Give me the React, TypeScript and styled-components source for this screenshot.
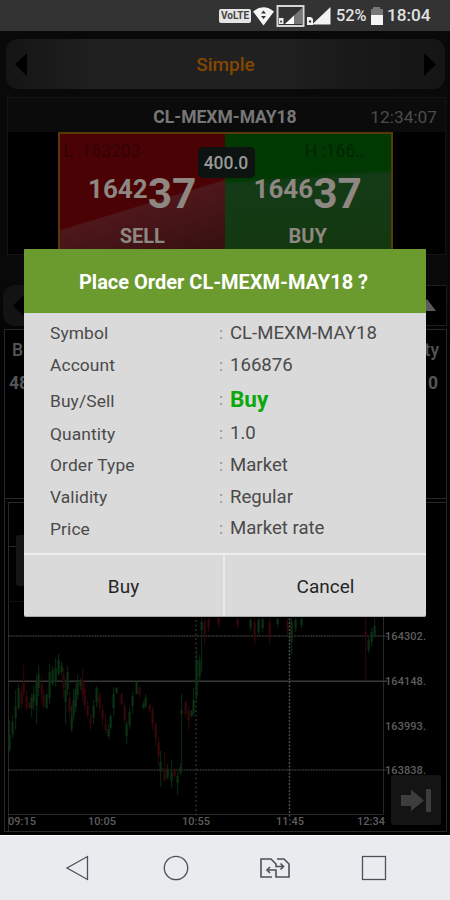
import React from "react";
import styled, { createGlobalStyle } from "styled-components";

const GlobalStyle = createGlobalStyle`
  * { box-sizing: border-box; }
  body { margin: 0; background: #000; font-family: Roboto, "Liberation Sans", sans-serif; }
`;

const Phone = styled.div`
  position: relative;
  width: 450px;
  height: 900px;
  display: flex;
  flex-direction: column;
  overflow: hidden;
  background: #000;
  white-space: nowrap;
`;

const StatusBar = styled.header`
  height: 31px;
  flex: none;
  display: flex;
  align-items: center;
  justify-content: flex-end;
  padding-right: 18px;
  background: #333;
  color: #e2e2e2;
`;
const VolteBadge = styled.span`
  width: 32px;
  height: 14px;
  border-radius: 2px;
  background: #e4e4e4;
  color: #444;
  font-size: 10px;
  font-weight: 700;
  line-height: 14px;
  text-align: center;
`;
const StatusIcon = styled.svg<{ $gap: number }>`
  display: block;
  flex: none;
  margin-left: ${(p) => p.$gap}px;
`;
const StatusText = styled.span<{ $size: number; $gap: number; $width: number }>`
  width: ${(p) => p.$width}px;
  margin-left: ${(p) => p.$gap}px;
  font-size: ${(p) => p.$size}px;
  font-weight: 500;
  line-height: 31px;
`;

const Screen = styled.main`
  height: 804px;
  flex: none;
  display: flex;
  flex-direction: column;
  padding: 0 3px 0 4px;
  background: linear-gradient(#090909 0 250px, #040404 300px, #000 310px);
`;

const ModeBar = styled.div`
  height: 50px;
  flex: none;
  margin: 8px 2px 0 2px;
  padding: 0 8px;
  display: flex;
  align-items: center;
  justify-content: space-between;
  border-radius: 12px;
  background: linear-gradient(90deg, #151515, #1b1b1b 12%, #202020 20%, #202020 64%, #191919 78%, #151515);
  color: #854600;
  font-size: 19px;
  font-weight: 500;
`;

const Quote = styled.section`
  flex: none;
  height: 158px;
  margin: 8px 1px 0 3px;
  border: 1px solid #131313;
  display: flex;
  flex-direction: column;
`;
const QuoteHeader = styled.div`
  height: 34px;
  flex: none;
  display: grid;
  grid-template-columns: 1fr auto 1fr;
  align-items: center;
  padding: 3px 8px 0 5px;
  background: #0b0b0b;
`;
const QuoteSymbol = styled.span`
  grid-column: 2;
  color: #777;
  font-size: 17.5px;
  font-weight: 700;
`;
const QuoteTime = styled.span`
  justify-self: end;
  color: #4b4b4b;
  font-size: 17.3px;
`;
const QuoteBody = styled.div`
  flex: 1;
  display: flex;
  justify-content: center;
  padding-right: 3px;
  background: #000;
`;
const PricePair = styled.div`
  position: relative;
  width: 335px;
  display: grid;
  grid-template-columns: 1fr 1fr;
  border: 2px solid #573a07;
  border-bottom: 0;
`;
const PriceTile = styled.div<{ $side: "sell" | "buy" }>`
  display: flex;
  flex-direction: column;
  align-items: center;
  color: #8e8782;
  background: ${(p) =>
    p.$side === "sell"
      ? "linear-gradient(163deg, #4a0205 0 56%, #4e171b 57%, #35100f 100%)"
      : "linear-gradient(176deg, #003902 0 35%, #143b17 39%, #13380f 100%)"};
`;
const DayLevel = styled.span<{ $side: "sell" | "buy" }>`
  align-self: ${(p) => (p.$side === "sell" ? "flex-start" : "flex-end")};
  margin: 7px ${(p) => (p.$side === "sell" ? "0 0 4px" : "26px 0 0")};
  height: 20px;
  line-height: 20px;
  font-size: 17.5px;
  color: ${(p) => (p.$side === "sell" ? "#330308" : "#022402")};
`;
const Price = styled.div`
  height: 42px;
  margin-top: 11px;
  display: flex;
  align-items: flex-start;
  font-weight: 700;
`;
const PriceMain = styled.span`
  font-size: 26px;
  line-height: 35px;
`;
const PricePips = styled.span`
  font-size: 42.5px;
  line-height: 43px;
`;
const SideLabel = styled.span`
  margin-top: 7px;
  font-size: 20px;
  font-weight: 700;
  line-height: 30px;
`;
const Spread = styled.span`
  position: absolute;
  left: 138px;
  top: 13px;
  width: 57px;
  height: 31px;
  border-radius: 5px;
  background: #0c1310;
  color: #999;
  font-size: 17.5px;
  font-weight: 500;
  line-height: 33px;
  text-align: center;
`;

const Toolbar = styled.div`
  flex: none;
  height: 42px;
  margin: 29px 0 0 -1px;
  display: flex;
  justify-content: space-between;
  align-items: center;
`;
const ToolSlot = styled.div<{ $outlined?: boolean }>`
  width: 40px;
  height: 41px;
  display: flex;
  align-items: center;
  justify-content: ${(p) => (p.$outlined ? "flex-end" : "flex-start")};
  padding: ${(p) => (p.$outlined ? "0 11px 0 0" : "0 9px")};
  border-radius: ${(p) => (p.$outlined ? "0" : "12px")};
  border: ${(p) => (p.$outlined ? "1px solid #1d1d1d" : "0")};
  background: ${(p) => (p.$outlined ? "#000" : "#131313")};
`;

const Depth = styled.section`
  flex: none;
  height: 169px;
  margin-top: 3px;
  padding: 3px 7px 0 3px;
  border: 1px solid #282828;
  border-bottom: 0;
  background: #000;
`;
const DepthRow = styled.div<{ $head?: boolean }>`
  height: 33px;
  padding: ${(p) => (p.$head ? "0 0 0 4px" : "0 1px 0 1px")};
  display: flex;
  align-items: center;
  justify-content: space-between;
  color: #555;
  font-size: 17.5px;
  font-weight: ${(p) => (p.$head ? 500 : 700)};
`;

const ChartPanel = styled.section`
  flex: none;
  position: relative;
  height: 334px;
  border: 1px solid #292929;
  background: #000;
`;
const ChartSvg = styled.svg`
  display: block;
`;
const JumpButton = styled.button`
  position: absolute;
  right: 5px;
  bottom: 6px;
  width: 50px;
  height: 50px;
  padding: 0;
  border: 0;
  border-radius: 3px;
  background: #141414;
`;

const NavBar = styled.nav`
  flex: none;
  height: 65px;
  border-top: 1px solid #fafafa;
  display: grid;
  grid-template-columns: 100px 98px 100px 98px;
  justify-content: center;
  justify-items: center;
  align-items: center;
  background: #e9ebef;
`;
const NavIcon = styled.svg`
  display: block;
  fill: none;
  stroke: #4c5159;
  stroke-width: 1.3;
`;

const Dialog = styled.div`
  position: absolute;
  left: 24px;
  top: 249px;
  width: 402px;
  height: 368px;
  display: flex;
  flex-direction: column;
  border-radius: 2px;
  overflow: hidden;
  background: #dadada;
  border-bottom: 1px solid #aaa;
`;
const DialogTitle = styled.h1`
  margin: 0;
  height: 64px;
  flex: none;
  padding-right: 3px;
  background: #6b9a2f;
  color: #fff;
  font-size: 20px;
  font-weight: 700;
  line-height: 67px;
  text-align: center;
`;
const Details = styled.dl`
  margin: 0;
  height: 240px;
  flex: none;
  padding: 4px 26px 0;
  color: #4a4a4a;
`;
const DetailRow = styled.div<{ $tall?: boolean }>`
  height: ${(p) => (p.$tall ? 37 : 31.7)}px;
  padding-top: ${(p) => (p.$tall ? 1 : 0)}px;
  display: grid;
  grid-template-columns: 169px 11px 1fr;
  align-items: center;
`;
const Term = styled.dt<{ $low?: boolean }>`
  padding-top: ${(p) => (p.$low ? 3 : 1)}px;
  font-size: 17.4px;
  letter-spacing: 0.1px;
`;
const Colon = styled.span`
  font-size: 17px;
  color: #888;
`;
const Value = styled.dd<{ $buy?: boolean }>`
  margin: 0;
  font-size: ${(p) => (p.$buy ? 22.5 : 18.6)}px;
  font-weight: ${(p) => (p.$buy ? 700 : 400)};
  color: ${(p) => (p.$buy ? "#0ca90c" : "#4a4a4a")};
`;
const Actions = styled.div`
  flex: 1;
  display: grid;
  grid-template-columns: 201px 1fr;
  border-top: 2px solid #efefef;
`;
const Action = styled.button`
  border: 0;
  border-right: 2px solid #e8e8e8;
  padding: 1px 0 0;
  background: transparent;
  font: 400 19px Roboto, "Liberation Sans", sans-serif;
  color: #262626;
  &:last-child { border-right: 0; }
`;

const details = [
  ["Symbol", "CL-MEXM-MAY18"],
  ["Account", "166876"],
  ["Buy/Sell", "Buy"],
  ["Quantity", "1.0"],
  ["Order Type", "Market"],
  ["Validity", "Regular"],
  ["Price", "Market rate"],
];

/* Price bars: x, high, low, body top, body bottom, direction (up/down) */
type Bar = [number, number, number, number, number, "u" | "d"];
const bars: Bar[] = [
  [9, 720, 752, 735, 750, "u"], [12, 716, 738, 722, 734, "u"], [15, 690, 730, 706, 718, "u"],
  [18, 684, 710, 688, 708, "u"], [21, 686, 708, 692, 704, "d"], [23, 665, 697, 682, 694, "d"],
  [26, 690, 710, 696, 708, "d"], [29, 702, 709, 703, 708, "d"], [31, 694, 717, 698, 708, "u"],
  [33, 686, 710, 694, 702, "u"], [36, 675, 724, 682, 706, "u"], [38, 665, 696, 674, 688, "u"],
  [41, 676, 700, 684, 694, "d"], [43, 690, 709, 695, 706, "d"], [46, 693, 709, 695, 708, "u"],
  [49, 664, 704, 672, 698, "u"], [52, 666, 686, 670, 684, "u"], [55, 658, 687, 668, 682, "u"],
  [58, 654, 676, 660, 674, "u"], [61, 662, 676, 666, 672, "u"], [63, 668, 698, 675, 688, "d"],
  [65, 680, 724, 690, 702, "u"], [67, 666, 695, 672, 690, "u"], [69, 692, 716, 698, 712, "d"],
  [71, 706, 732, 716, 729, "u"], [73, 690, 721, 700, 716, "u"], [75, 684, 712, 689, 707, "u"],
  [77, 674, 700, 680, 695, "u"], [80, 678, 690, 680, 686, "u"], [82, 668, 701, 680, 694, "d"],
  [84, 683, 710, 689, 705, "d"], [87, 701, 718, 706, 715, "d"], [90, 714, 730, 718, 724, "d"],
  [93, 700, 724, 706, 718, "u"], [96, 686, 707, 688, 702, "u"], [99, 692, 712, 695, 708, "d"],
  [102, 704, 726, 710, 719, "d"], [105, 714, 734, 724, 730, "d"], [108, 724, 739, 729, 736, "u"],
  [110, 714, 730, 716, 728, "u"], [113, 687, 716, 694, 708, "u"], [116, 687, 694, 688, 693, "u"],
  [121, 692, 706, 694, 704, "d"], [124, 702, 724, 706, 720, "d"], [126, 721, 744, 724, 736, "u"],
  [129, 707, 729, 712, 725, "u"], [132, 692, 714, 696, 706, "u"], [136, 680, 694, 682, 694, "u"],
  [139, 686, 698, 688, 694, "d"], [143, 701, 709, 704, 708, "u"], [145, 694, 708, 698, 706, "u"],
  [149, 704, 712, 705, 710, "d"], [152, 706, 730, 710, 724, "d"], [155, 722, 746, 724, 738, "d"],
  [158, 737, 765, 742, 756, "d"], [160, 751, 787, 762, 772, "u"], [164, 752, 782, 768, 781, "d"],
  [167, 764, 780, 770, 778, "u"], [171, 760, 788, 772, 781, "u"], [174, 768, 778, 770, 776, "d"],
  [177, 772, 795, 776, 783, "u"], [180, 763, 775, 767, 773, "u"], [181, 694, 772, 710, 714, "u"],
  [185, 700, 718, 702, 714, "d"], [188, 706, 730, 710, 720, "d"], [191, 710, 718, 711, 716, "u"],
  [193, 688, 716, 700, 713, "u"], [196, 650, 702, 660, 696, "u"], [199, 655, 682, 660, 677, "u"],
  [201, 618, 672, 622, 630, "u"], [204, 618, 644, 622, 635, "d"], [208, 618, 632, 619, 627, "d"],
  [218, 618, 627, 618, 624, "d"], [237, 618, 628, 619, 625, "d"], [250, 618, 631, 620, 628, "u"],
  [254, 618, 645, 622, 638, "d"], [258, 618, 635, 620, 632, "u"], [262, 618, 632, 619, 628, "u"],
  [269, 618, 644, 622, 638, "d"], [277, 618, 627, 619, 624, "u"], [287, 618, 636, 622, 630, "d"],
  [291, 618, 654, 621, 642, "u"], [295, 618, 632, 620, 628, "u"], [301, 618, 628, 619, 625, "u"],
  [365, 618, 681, 632, 636, "d"], [368, 638, 653, 640, 650, "u"], [371, 628, 646, 632, 642, "u"],
  [374, 618, 638, 626, 636, "u"],
];

function Chart() {
  return (
    <ChartSvg width="441" height="332" viewBox="5 499 441 332">
      <g stroke="#282828" fill="none">
        <path d="M8.5 831V502.5H446M8 546.5H383M8 814.5H383.5M383.5 502V814" />
        <path d="M8 601.5H383" stroke="#101010" />
      </g>
      <g stroke="#454545" fill="none">
        <path d="M8 636H387M8 770H387" strokeDasharray="2 .7" />
        <path d="M8 681.2H387" stroke="#383838" strokeWidth="1.6" />
        <path d="M289.5 503V818" stroke="#515151" strokeDasharray="2 1.5" strokeWidth="1.4" />
        <path d="M196 503V818" stroke="#303030" strokeDasharray="2 2.5" strokeWidth="1.4" />
      </g>
      {bars.map(([x, hi, lo, top, bottom, dir], i) => (
        <g key={i} fill={dir === "u" ? "#0b3013" : "#350709"}>
          <rect x={x} y={hi} width="1.2" height={lo - hi} opacity=".75" />
          <rect x={x - 0.5} y={top} width="2.2" height={bottom - top} />
        </g>
      ))}
      <rect x="16" y="535" width="50" height="51" rx="3" fill="#151515" />
      <g fill="#5e5e5e" fontFamily='Roboto, "Liberation Sans", sans-serif' fontSize="11" fontWeight="500">
        {([["164302.", 640], ["164148.", 685], ["163993.", 729.5], ["163838.", 774]] as [string, number][]).map(([t, y]) => (
          <text key={t} x="385" y={y} textLength="41">{t}</text>
        ))}
        {([["09:15", 8], ["10:05", 88], ["10:55", 182], ["11:45", 276], ["12:34", 357]] as [string, number][]).map(([t, x]) => (
          <text key={t} x={x} y="825" textLength="28">{t}</text>
        ))}
      </g>
    </ChartSvg>
  );
}

function Signal({ boxed }: { boxed?: boolean }) {
  return boxed ? (
    <StatusIcon $gap={1} width="30" height="24" viewBox="0 0 30 24">
      <rect x="1.5" y="2" width="26" height="20" fill="none" stroke="#d5d5d5" strokeWidth="2" />
      <path d="M9 20L26 4V20Z" fill="#777" />
      <path d="M9 20L18 11.5V20Z" fill="#fff" />
      <rect x="3" y="14" width="4.5" height="6" fill="#eee" />
      <circle cx="5" cy="17.5" r="1" fill="#333" />
    </StatusIcon>
  ) : (
    <StatusIcon $gap={1} width="25" height="20" viewBox="0 0 25 20">
      <path d="M5 18.5L23.5 1V18.5Z" fill="#f2f2f2" />
      <path d="M0 11H4L6 13V19H0Z" fill="#f2f2f2" />
      <circle cx="3" cy="15.5" r="1.2" fill="#333" />
    </StatusIcon>
  );
}

function Triangle({ dir, fill }: { dir: "left" | "right" | "up"; fill: string }) {
  const d = { left: "M13 0V23L1 11.5Z", right: "M1 0V23L13 11.5Z", up: "M-3 17L6 5L15 17Z" }[dir];
  return (
    <svg width="14" height="23" viewBox="0 0 14 23" overflow="visible">
      <path d={d} fill={fill} />
    </svg>
  );
}

export default function App() {
  return (
    <Phone>
      <GlobalStyle />
      <StatusBar>
        <VolteBadge>VoLTE</VolteBadge>
        <StatusIcon $gap={1} width="23" height="20" viewBox="0 0 23 20">
          <path d="M1 5.5Q11.5-3 22 5.5L11.5 19.5Z" fill="#f5f5f5" />
          <path d="M9 7.5L11.5 4.5L14 7.5ZM9 10L11.5 13L14 10Z" fill="#333" />
        </StatusIcon>
        <Signal boxed />
        <Signal />
        <StatusText $size={16.3} $gap={4} $width={31}>52%</StatusText>
        <StatusIcon $gap={3} width="14" height="20" viewBox="0 0 14 20">
          <path d="M3 1H10V3H13V9H1V3H3Z" fill="#777" />
          <rect x="1" y="9" width="12" height="10" fill="#f5f5f5" />
        </StatusIcon>
        <StatusText $size={17.2} $gap={3} $width={45}>18:04</StatusText>
      </StatusBar>

      <Screen>
        <ModeBar>
          <Triangle dir="left" fill="#000" />
          <span>Simple</span>
          <Triangle dir="right" fill="#000" />
        </ModeBar>

        <Quote>
          <QuoteHeader>
            <QuoteSymbol>CL-MEXM-MAY18</QuoteSymbol>
            <QuoteTime>12:34:07</QuoteTime>
          </QuoteHeader>
          <QuoteBody>
            <PricePair>
              <PriceTile $side="sell">
                <DayLevel $side="sell">L :163203</DayLevel>
                <Price><PriceMain>1642</PriceMain><PricePips>37</PricePips></Price>
                <SideLabel>SELL</SideLabel>
              </PriceTile>
              <PriceTile $side="buy">
                <DayLevel $side="buy">H :166..</DayLevel>
                <Price><PriceMain>1646</PriceMain><PricePips>37</PricePips></Price>
                <SideLabel>BUY</SideLabel>
              </PriceTile>
              <Spread>400.0</Spread>
            </PricePair>
          </QuoteBody>
        </Quote>

        <Toolbar>
          <ToolSlot><Triangle dir="left" fill="#000" /></ToolSlot>
          <ToolSlot $outlined><Triangle dir="up" fill="#5b5b5b" /></ToolSlot>
        </Toolbar>

        <Depth>
          <DepthRow $head><span>B</span><span>ty</span></DepthRow>
          <DepthRow><span>48</span><span>0</span></DepthRow>
        </Depth>

        <ChartPanel>
          <Chart />
          <JumpButton aria-label="Jump to latest">
            <svg width="50" height="50" viewBox="0 0 50 50" fill="#3d3d3d">
              <path d="M10 20H20V14.5L33 25.5L20 36V31H10Z" />
              <rect x="35" y="14" width="5" height="23" rx="1" />
            </svg>
          </JumpButton>
        </ChartPanel>
      </Screen>

      <NavBar>
        <NavIcon width="26" height="26" viewBox="0 0 26 26"><path d="M23.5 1.5V24.5L3 13Z" /></NavIcon>
        <NavIcon width="26" height="26" viewBox="0 0 26 26"><circle cx="13" cy="13" r="11.7" /></NavIcon>
        <NavIcon width="32" height="24" viewBox="0 0 32 24">
          <path d="M13 21H2V3H12L17 8V10.5H24M18 3H25L30 8V21H17V14H8" strokeWidth="1.6" />
          <path d="M21.5 7.5L24.5 10.5L21.5 13.5M11 11L8 14L11 17" strokeWidth="1.6" />
        </NavIcon>
        <NavIcon width="26" height="26" viewBox="0 0 26 26"><rect x="1.5" y="1.5" width="23" height="23" /></NavIcon>
      </NavBar>

      <Dialog role="dialog">
        <DialogTitle>Place Order CL-MEXM-MAY18 ?</DialogTitle>
        <Details>
          {details.map(([term, value]) => (
            <DetailRow key={term} $tall={value === "Buy"}>
              <Term $low={value === "Buy"}>{term}</Term>
              <Colon>:</Colon>
              <Value $buy={value === "Buy"}>{value}</Value>
            </DetailRow>
          ))}
        </Details>
        <Actions>
          <Action>Buy</Action>
          <Action>Cancel</Action>
        </Actions>
      </Dialog>
    </Phone>
  );
}
